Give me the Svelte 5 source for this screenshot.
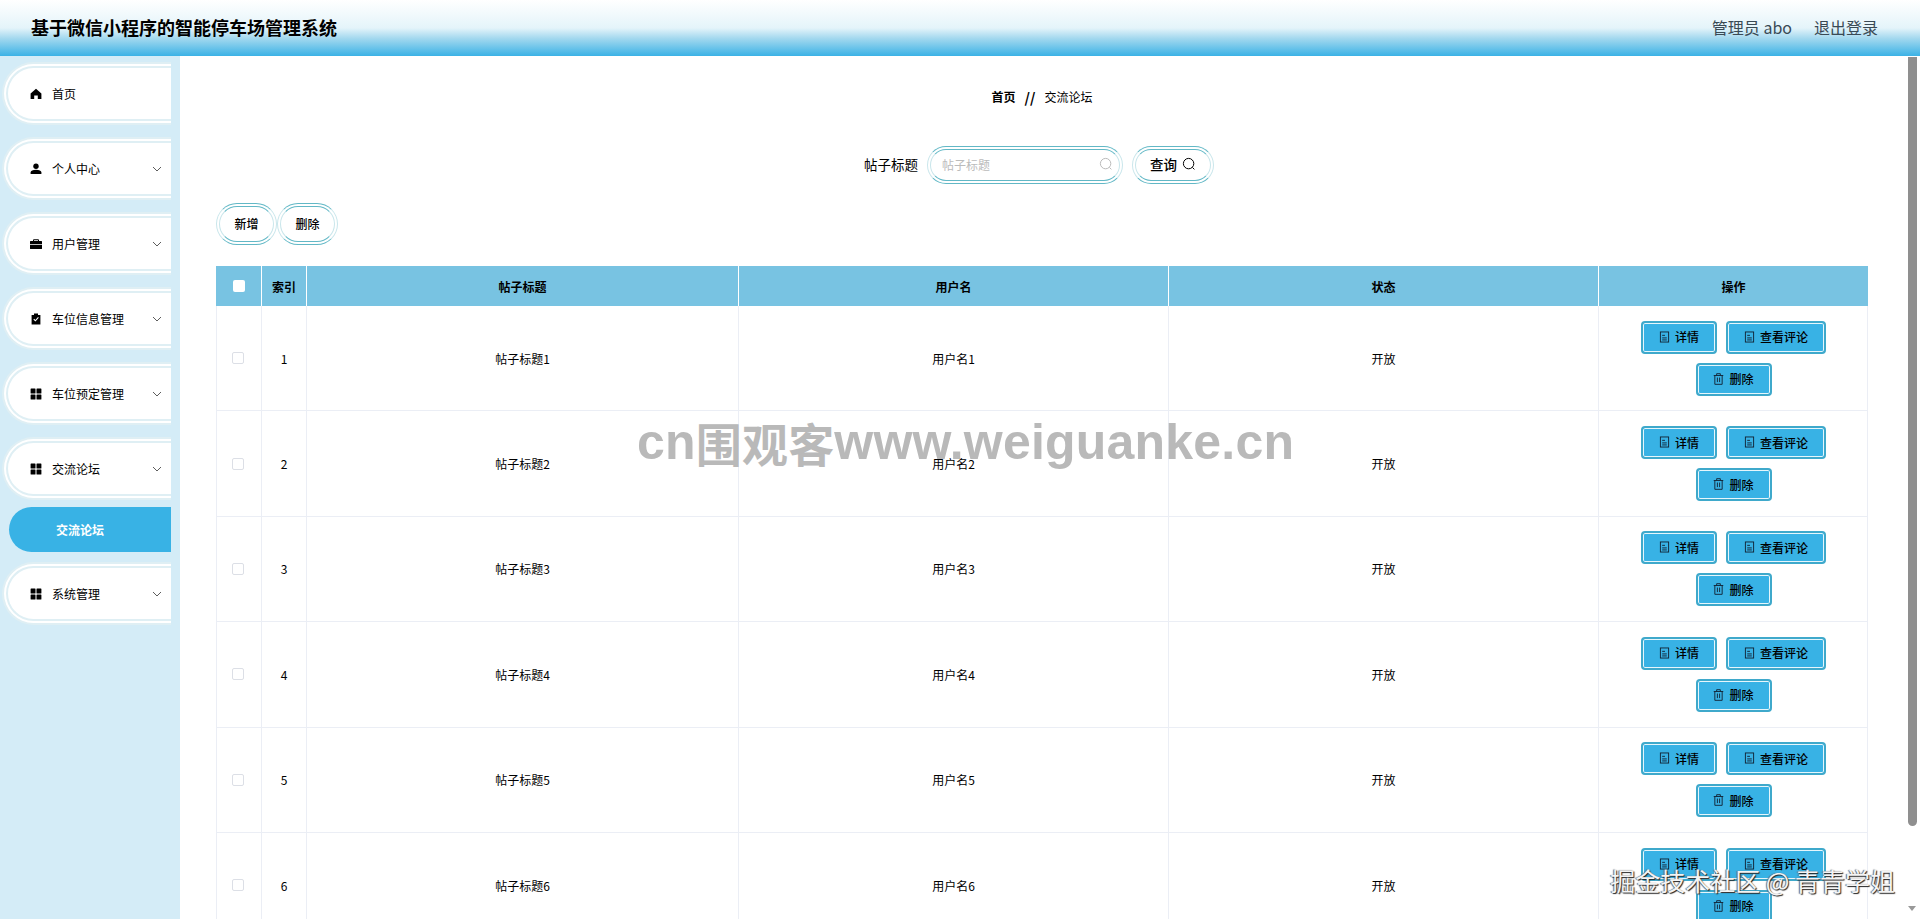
<script>
  const menu = [
    { label: '首页', icon: 'home' },
    { label: '个人中心', icon: 'user', arrow: true },
    { label: '用户管理', icon: 'case', arrow: true },
    { label: '车位信息管理', icon: 'clip', arrow: true },
    { label: '车位预定管理', icon: 'grid', arrow: true },
    { label: '交流论坛', icon: 'grid', arrow: true, child: '交流论坛' },
    { label: '系统管理', icon: 'grid', arrow: true }
  ];
  const rows = [1, 2, 3, 4, 5, 6];
</script>

{#snippet menuIcon(name)}
  <svg class="mi" viewBox="0 0 12 12" fill="#000">
    {#if name === 'home'}
      <path d="M6 .8 .6 5.4V11h3.6V7.6h3.6V11h3.6V5.4z" />
    {:else if name === 'user'}
      <circle cx="6" cy="3.2" r="2.7" />
      <path d="M.6 11V9.4C.6 7.6 3 6.8 6 6.8s5.4.8 5.4 2.6V11z" />
    {:else if name === 'case'}
      <path d="M4 1.2h4a1 1 0 0 1 1 1V3h2.4a.6.6 0 0 1 .6.6V6H0V3.6A.6.6 0 0 1 .6 3H3v-.8a1 1 0 0 1 1-1zM4 3h4v-.8H4zM0 6.8h12v3.6a.6.6 0 0 1-.6.6H.6a.6.6 0 0 1-.6-.6z" />
    {:else if name === 'clip'}
      <path fill-rule="evenodd" d="M4 .5h4V2h2.4v9.5H1.6V2H4zM3.4 6.4 5.4 8.6 8.8 4.8 8 4.1 5.4 7 4.1 5.7z" />
    {:else}
      <rect x=".6" y=".6" width="4.9" height="4.9" rx=".5" />
      <rect x="6.5" y=".6" width="4.9" height="4.9" rx=".5" />
      <rect x=".6" y="6.5" width="4.9" height="4.9" rx=".5" />
      <rect x="6.5" y="6.5" width="4.9" height="4.9" rx=".5" />
    {/if}
  </svg>
{/snippet}

{#snippet search(cls)}
  <svg class={cls} viewBox="0 0 14 14" fill="none" stroke="currentColor" stroke-width="1">
    <circle cx="6.6" cy="6.6" r="5.2" />
    <path d="m10.4 10.4 2 2" />
  </svg>
{/snippet}

{#snippet doc()}
  <svg class="bi" viewBox="0 0 12 14" fill="none" stroke="#123" stroke-width="1">
    <rect x="1.5" y="1.5" width="9" height="11" />
    <path d="M3.5 5.2h3M3.5 8h5M3.5 10.2h5" />
  </svg>
{/snippet}

{#snippet trash()}
  <svg class="bi" viewBox="0 0 12 14" fill="none" stroke="#123" stroke-width="1">
    <path d="M.8 3.2h10.4M4 3V1.2h4V3M2 3.2v9.6h8V3.2M4.8 5.4v5M7.2 5.4v5" />
  </svg>
{/snippet}

<div class="page">
  <header class="top">
    <h1>基于微信小程序的智能停车场管理系统</h1>
    <div class="user">
      <span>管理员 abo</span>
      <span>退出登录</span>
    </div>
  </header>

  <div class="body">
    <aside class="side">
      {#each menu as m}
        <div class="item">
          {@render menuIcon(m.icon)}
          <span class="lbl">{m.label}</span>
          {#if m.arrow}
            <svg class="chev" viewBox="0 0 10 6" fill="none" stroke="#333" stroke-width=".8"><path d="m1 1 4 4 4-4" /></svg>
          {/if}
        </div>
        {#if m.child}
          <div class="sub">{m.child}</div>
        {/if}
      {/each}
    </aside>

    <main class="main">
      <div class="crumb"><b>首页</b><b class="sep">//</b><span>交流论坛</span></div>

      <div class="filter">
        <span class="flabel">帖子标题</span>
        <div class="input dbl">
          <span>帖子标题</span>
          {@render search('si')}
        </div>
        <button class="query dbl"><span>查询</span> {@render search('qi')}</button>
      </div>

      <div class="tools">
        <button class="tbtn dbl">新增</button>
        <button class="tbtn dbl">删除</button>
      </div>

      <div class="grid head">
        <div class="c"><span class="hcheck"></span></div>
        <div class="c">索引</div>
        <div class="c">帖子标题</div>
        <div class="c">用户名</div>
        <div class="c">状态</div>
        <div class="c">操作</div>
      </div>
      {#each rows as n}
        <div class="grid row">
          <div class="c"><span class="check"></span></div>
          <div class="c">{n}</div>
          <div class="c">帖子标题{n}</div>
          <div class="c">用户名{n}</div>
          <div class="c">开放</div>
          <div class="c ops">
            <button class="act">{@render doc()}详情</button>
            <button class="act wide">{@render doc()}查看评论</button>
            <button class="act">{@render trash()}删除</button>
          </div>
        </div>
      {/each}
    </main>
  </div>

  <div class="scroll">
    <div class="thumb"></div>
    <div class="down"></div>
  </div>
  <div class="mark1"><span>cn</span><span class="cjk">围观客</span><span>www.weiguanke.cn</span></div>
  <div class="mark2">掘金技术社区 @ 青青学姐</div>
</div>

<style>
  :global(body) {
    margin: 0;
    font-family: "Noto Sans CJK SC", "Noto Sans", sans-serif;
    color: #000;
  }
  .page {
    position: relative;
    height: 100vh;
    overflow: hidden;
    display: flex;
    flex-direction: column;
    background: #fff;
  }
  .top {
    height: 56px;
    flex: none;
    box-sizing: border-box;
    display: flex;
    align-items: center;
    justify-content: space-between;
    padding: 0 42px 2px 31px;
    background: linear-gradient(180deg, #fff 0%, #e4f4fa 50%, #a5d9ef 68%, #3bb2e6 100%);
  }
  h1 {
    margin: 0;
    font-size: 18px;
    font-weight: 700;
  }
  .user {
    display: flex;
    gap: 22px;
    font-size: 16px;
    color: #3a4a55;
  }
  .body {
    flex: 1;
    display: flex;
    min-height: 0;
  }
  .side {
    width: 180px;
    flex: none;
    background: #d4ecf7;
    box-sizing: border-box;
    padding: 6px 9px 0 2px;
  }
  .item {
    height: 63px;
    box-sizing: border-box;
    margin-bottom: 12px;
    display: flex;
    align-items: center;
    padding-left: 22px;
    font-size: 12px;
    background: #fff;
    border: 6px double #dfeff4;
    border-right: 0;
    border-radius: 32px 0 0 32px;
  }
  .mi {
    width: 12px;
    height: 12px;
    margin-right: 10px;
  }
  .lbl {
    flex: 1;
  }
  .chev {
    width: 10px;
    height: 6px;
    margin-right: 9px;
  }
  .sub {
    height: 45px;
    margin: -5px 0 10px 7px;
    border-radius: 23px 0 0 23px;
    background: #38b2e5;
    color: #fff;
    font-size: 12px;
    font-weight: 700;
    display: flex;
    align-items: center;
    padding-left: 47px;
  }
  .main {
    flex: 1;
    min-width: 0;
    padding: 0 52px 0 36px;
  }
  .crumb {
    height: 27px;
    margin-top: 27px;
    display: flex;
    justify-content: center;
    align-items: center;
    gap: 9px;
    font-size: 12px;
  }
  .crumb .sep {
    font-size: 14px;
  }
  .filter {
    margin-top: 36px;
    height: 38px;
    display: flex;
    justify-content: center;
    align-items: center;
    padding-right: 6px;
    font-size: 13.5px;
  }
  .flabel {
    margin-right: 9px;
    padding-bottom: 2px;
  }
  .dbl {
    border: 4px double #62b8c6;
    border-left-color: #c9e6eb;
    border-right-color: #c9e6eb;
    background: #fff;
    box-sizing: border-box;
    border-radius: 21px;
  }
  .input {
    width: 196px;
    height: 38px;
    display: flex;
    align-items: center;
    justify-content: space-between;
    padding: 0 6px 2px 11px;
    color: #bbb;
    font-size: 12px;
    margin-right: 9px;
  }
  .si {
    width: 14px;
    height: 14px;
    color: #bbb;
  }
  button {
    font-family: inherit;
    color: inherit;
    padding: 0;
    cursor: pointer;
  }
  .query {
    width: 82px;
    height: 38px;
    font-size: 13.5px;
    font-weight: 500;
    display: flex;
    align-items: center;
    justify-content: center;
    gap: 5px;
    padding-bottom: 2px;
  }
  .qi {
    width: 14px;
    height: 14px;
  }
  .tools {
    display: flex;
    margin-top: 19px;
    margin-bottom: 21px;
  }
  .tbtn {
    width: 61px;
    height: 42px;
    font-size: 12px;
    font-weight: 500;
    padding-bottom: 2px;
  }
  .grid {
    display: grid;
    grid-template-columns: 45px 45px 432px 430px 430px 270px;
    width: 1652px;
    font-size: 12px;
  }
  .c {
    display: flex;
    align-items: center;
    justify-content: center;
    box-sizing: border-box;
  }
  .head {
    height: 40px;
    background: #78c3e2;
    font-weight: 700;
  }
  .head .c + .c {
    border-left: 1px solid #fff;
  }
  .row {
    height: 105.4px;
    border-bottom: 1px solid #ebeef5;
    box-sizing: border-box;
    border-right: 1px solid #ebeef5;
  }
  .row .c {
    border-left: 1px solid #ebeef5;
  }
  .hcheck, .check {
    width: 12px;
    height: 12px;
    border-radius: 2px;
    box-sizing: border-box;
  }
  .hcheck {
    background: #fff;
  }
  .check {
    border: 1px solid #dcdfe6;
    margin-right: 2px;
  }
  .ops {
    flex-wrap: wrap;
    gap: 9px;
    align-content: center;
    padding: 0 30px;
  }
  .act {
    width: 76px;
    height: 33px;
    box-sizing: border-box;
    border: 2px solid #3fa9cb;
    border-radius: 4px;
    box-shadow: inset 0 0 0 1px #e6f6fc;
    background: #38b2e5;
    font-size: 12px;
    font-weight: 500;
    display: flex;
    align-items: center;
    justify-content: center;
    gap: 5px;
    padding-bottom: 1px;
  }
  .wide {
    width: 100px;
  }
  .bi {
    width: 11px;
    height: 14px;
  }
  .scroll {
    position: absolute;
    top: 56px;
    right: 0;
    bottom: 0;
    width: 12px;
    background: #fff;
  }
  .thumb {
    position: absolute;
    left: 0;
    top: 1px;
    width: 9px;
    height: 769px;
    background: #8f8f8f;
    border-radius: 0 0 5px 5px;
  }
  .down {
    position: absolute;
    left: 0;
    bottom: 8px;
    border: 4.5px solid transparent;
    border-top: 5px solid #999;
    border-bottom: 0;
  }
  .mark1 {
    position: absolute;
    left: 637px;
    top: 412px;
    display: flex;
    align-items: center;
    font-family: "Liberation Sans", sans-serif;
    font-weight: 700;
    font-size: 50px;
    letter-spacing: .2px;
    line-height: 60px;
    white-space: nowrap;
    color: #b9b9b9;
    pointer-events: none;
  }
  .cjk {
    font-family: "Noto Sans CJK SC", sans-serif;
    font-size: 46px;
  }
  .mark2 {
    position: absolute;
    right: 25px;
    top: 862px;
    font-size: 25px;
    line-height: 36px;
    white-space: nowrap;
    color: #f4f4f4;
    text-shadow: 1px 1px 1px #222, -1px 0 1px #666;
    pointer-events: none;
  }
</style>
